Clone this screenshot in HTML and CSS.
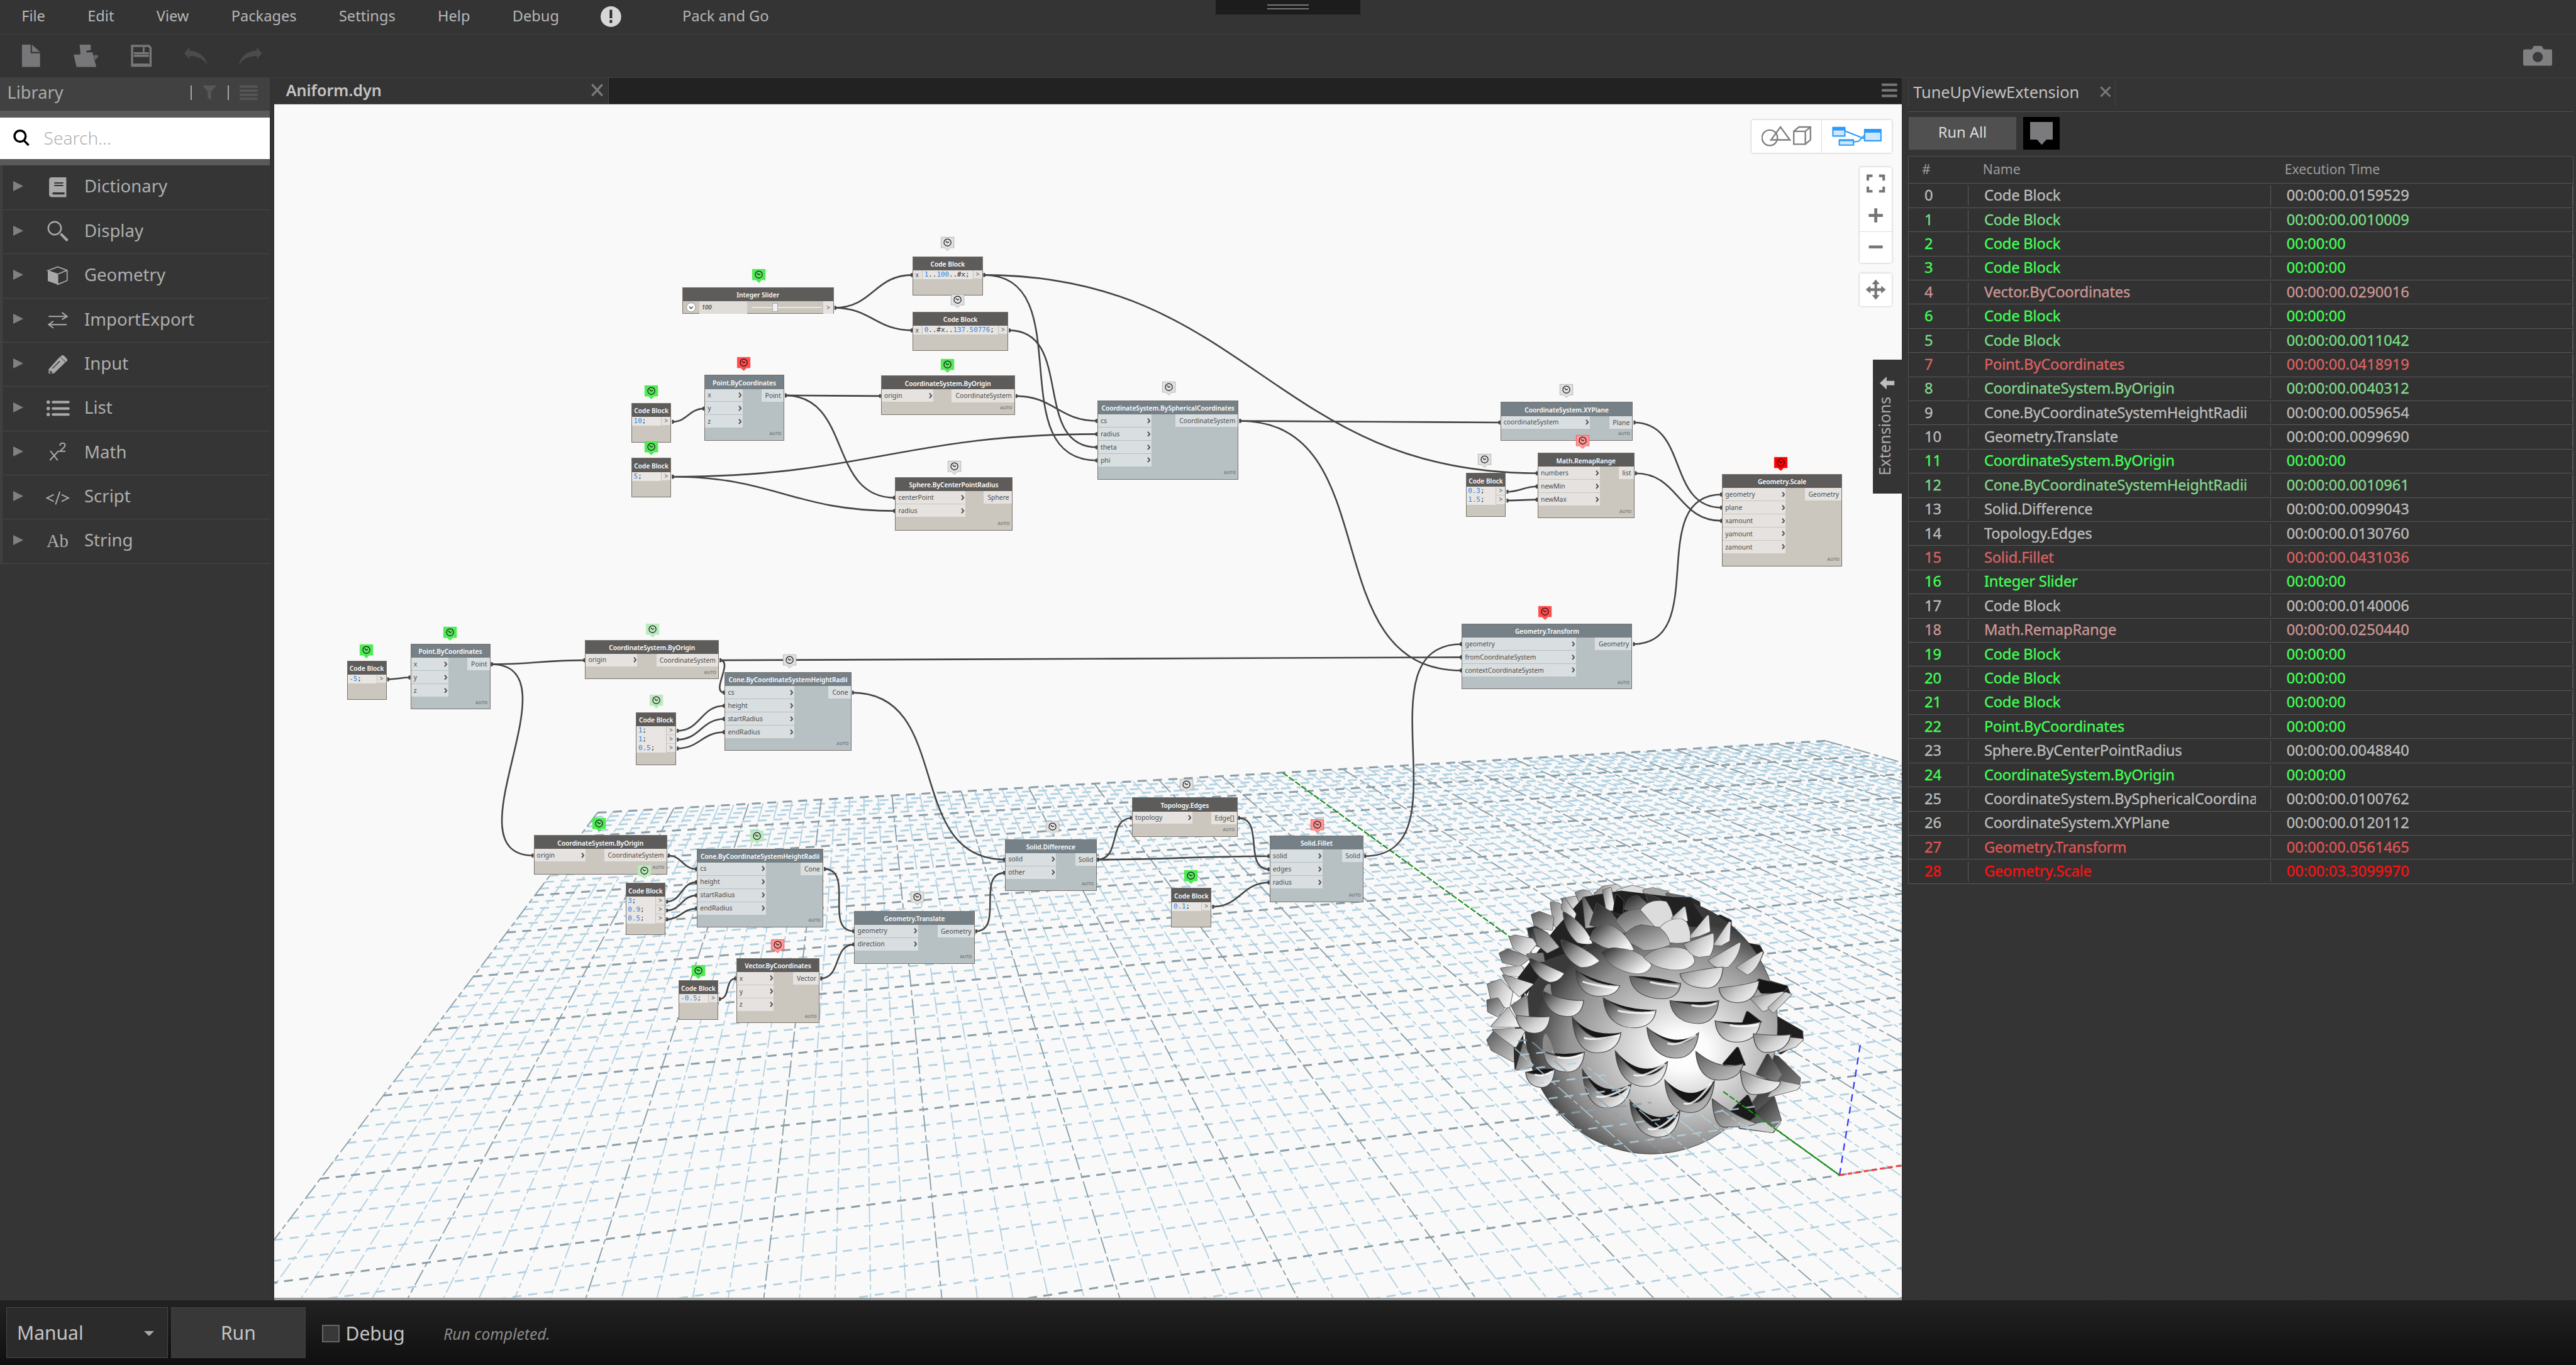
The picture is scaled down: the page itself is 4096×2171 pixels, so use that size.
FILE: index.html
```html
<!DOCTYPE html>
<html lang="en">
<head>
<meta charset="utf-8">
<title>Aniform.dyn</title>
<link rel="stylesheet" href="styles.css">
</head>
<body>
<div class="app">
  <header class="menubar">
    <span>File</span><span>Edit</span><span>View</span><span>Packages</span><span>Settings</span><span>Help</span><span>Debug</span>
    <svg class="alert" viewBox="0 0 48 48"><circle cx="24" cy="24" r="24" fill="#d6d6d6"/><path d="M21 8h6v20h-6zM21 32h6v7h-6z" fill="#2b2b2b"/></svg>
    <span class="pack">Pack and Go</span>
    <div class="handle"><i></i><i></i></div>
  </header>

  <div class="toolbar">
    <svg class="t-new" viewBox="0 0 42 52"><path d="M0 0h20v20h22v32H0z" fill="#77777a"/><path d="M23 0l19 17H23z" fill="#77777a"/></svg>
    <svg class="t-open" viewBox="0 0 58 52"><path d="M14 0h26v13l-9 1-3 6H16z" fill="#77777a"/><path d="M0 23h14l4-5h26l9 34H7z" fill="#77777a"/><path d="M50 36l8-9-3-3-9 1z" fill="#66666a"/></svg>
    <svg class="t-save" viewBox="0 0 49 52"><path d="M3 3h39l4 5v41H3zM7 20h35M7 26h35" fill="none" stroke="#77777a" stroke-width="5"/><path d="M28 6h4v12h-4zM6 44h36v5H6z" fill="#77777a"/></svg>
    <svg class="t-undo" viewBox="0 0 55 42"><path d="M0 14L12 0v8c24 2 38 14 42 34C46 28 32 21 12 20v8z" fill="#4b4b4b"/></svg>
    <svg class="t-redo" viewBox="0 0 55 42"><path d="M55 14L43 0v8C19 10 5 22 1 42 9 28 23 21 43 20v8z" fill="#4b4b4b"/></svg>
    <svg class="t-cam" viewBox="0 0 68 46"><path d="M4 8h16l5-8h18l5 8h16q4 0 4 4v30q0 4-4 4H4q-4 0-4-4V12q0-4 4-4z" fill="#808082"/><circle cx="34" cy="26" r="12" fill="#3a3a3a"/></svg>
  </div>

  <main class="main">
    <aside class="library">
      <div class="lib-head">
        <span>Library</span>
        <i class="bar"></i>
        <svg class="filter" viewBox="0 0 33 34"><path d="M0 0h33L20 14v20l-8-5V14z" fill="#575757"/></svg>
        <i class="bar"></i>
        <svg class="lines" viewBox="0 0 42 34"><path d="M0 2.500h42M0 12h42M0 21.500h42M0 31h42" stroke="#575757" stroke-width="5"/></svg>
      </div>
      <div class="search"><div class="search-box">
        <svg viewBox="0 0 38 40"><circle cx="16" cy="17" r="13" fill="none" stroke="#000" stroke-width="5"/><path d="M25 27l11 11" stroke="#000" stroke-width="5"/></svg>
        <span>Search...</span>
      </div></div>
      <ul class="lib-list">
        <li><svg class="ic" viewBox="0 0 52 52"><path d="M12 3h34v46H12q-6 0-6-6V9q0-6 6-6z" fill="#a9a9a9"/><path d="M18 16h21M18 22h21" stroke="#343434" stroke-width="3"/><path d="M14 38h28v5H14z" fill="#343434"/></svg>Dictionary</li>
        <li><svg class="ic" viewBox="0 0 52 52"><circle cx="19" cy="19" r="15" fill="none" stroke="#a9a9a9" stroke-width="3.500"/><path d="M33 32l16 16" stroke="#a9a9a9" stroke-width="6"/></svg>Display</li>
        <li><svg class="ic" viewBox="0 0 52 52"><path d="M3 14l23 8v24L3 38z" fill="#a9a9a9"/><path d="M3 14L26 5l22 8v24l-22 9V22zM26 22l22-9M3 14l23 8" fill="none" stroke="#a9a9a9" stroke-width="2.500"/></svg>Geometry</li>
        <li><svg class="ic" viewBox="0 0 52 52"><path d="M5 18h42M36 9l12 9-12 7M47 37H5M16 29L5 37l11 8" fill="none" stroke="#a9a9a9" stroke-width="3"/></svg>ImportExport</li>
        <li><svg class="ic" viewBox="0 0 52 52"><path d="M5 37L31 8l13 13-27 26H5z" fill="#a9a9a9"/><path d="M34 6q3-3 7 0l6 6q3 3 0 7l-2 1L32 8z" fill="#a9a9a9"/><path d="M14 35l17-17" stroke="#343434" stroke-width="2"/><path d="M8 40l6 4-2 2H8z" fill="#343434"/></svg>Input</li>
        <li><svg class="ic" viewBox="0 0 52 52"><path d="M15 11h36M15 26h36M15 40h36" stroke="#a9a9a9" stroke-width="6" stroke-linecap="round"/><path d="M4 11h0M4 26h0M4 40h0" stroke="#a9a9a9" stroke-width="8" stroke-linecap="round"/></svg>List</li>
        <li><svg class="ic" viewBox="0 0 52 52"><path d="M9 22l17 22M28 22L8 44" stroke="#a9a9a9" stroke-width="3"/><path d="M31 10q1-6 6-6 7 0 6 6-1 4-12 13h13" fill="none" stroke="#a9a9a9" stroke-width="3"/></svg>Math</li>
        <li><svg class="ic" viewBox="0 0 52 52"><path d="M17 20L1 28l16 8M35 20l16 8-16 8M31 13L21 43" fill="none" stroke="#a9a9a9" stroke-width="3"/></svg>Script</li>
        <li><b class="ic ab">Ab</b>String</li>
      </ul>
    </aside>

    <section class="workspace">
      <div class="tabs">
        <div class="tab"><span>Aniform.dyn</span><svg viewBox="0 0 28 30"><path d="M2 2l24 26M26 2L2 28" stroke="#7a7a7a" stroke-width="5"/></svg></div>
        <svg class="burger" viewBox="0 0 36 34"><path d="M0 4h36M0 17h36M0 30h36" stroke="#767676" stroke-width="6"/></svg>
      </div>
      <div class="canvas">
        <svg class="scene" id="scene" viewBox="638 243 3791 2781" preserveAspectRatio="none">
          <defs>
            <radialGradient id="ball" gradientUnits="userSpaceOnUse" cx="780" cy="900" r="600" gradientTransform="translate(780 0) scale(.9 1) translate(-780 0)">
              <stop offset="0" stop-color="#fff"/><stop offset=".16" stop-color="#fbfbfb"/><stop offset=".45" stop-color="#c6c6c6"/><stop offset=".75" stop-color="#929292"/><stop offset="1" stop-color="#3a3a3a"/>
            </radialGradient>
            <linearGradient id="g1" x1="0" y1=".2" x2=".9" y2=".8"><stop offset="0" stop-color="#3c3c3c"/><stop offset=".45" stop-color="#9a9a9a"/><stop offset="1" stop-color="#f4f4f4"/></linearGradient>
            <linearGradient id="g2" x1="0" y1="0" x2="1" y2=".6"><stop offset="0" stop-color="#828282"/><stop offset=".6" stop-color="#cfcfcf"/><stop offset="1" stop-color="#efefef"/></linearGradient>
            <linearGradient id="g3" x1="0" y1="0" x2=".9" y2="1"><stop offset="0" stop-color="#5a5a5a"/><stop offset="1" stop-color="#c4c4c4"/></linearGradient>
            <linearGradient id="g4" x1="0" y1="0" x2="1" y2="1"><stop offset="0" stop-color="#222"/><stop offset="1" stop-color="#8a8a8a"/></linearGradient>
            <clipPath id="over"><path d="M190 820L480 1000 620 1080 700 1190 860 1200 1000 1130 1200 1260 900 1400 190 1400z" transform="translate(3400 2000) scale(.66965 .49744)"/></clipPath>
          </defs>
          <g id="grid"></g>
          <g id="axes"></g>
          <g id="solid" transform="translate(3400 2000) scale(.66965 .49744)"></g>
          <g id="front"></g>
          <g id="wires" fill="none" stroke="#454545" stroke-width="3.800"></g>
        </svg>
        <div class="nodes" id="nodes"></div>

        <div class="viewmode">
          <div><svg class="shapes" viewBox="0 0 116 50"><g fill="none" stroke="#808080" stroke-width="3.500"><circle cx="19" cy="28" r="18"/><path d="M44 3l22 30H22zM75 13h27v30H75zM75 13l12-10h27l-12 10M114 3v30l-12 10"/></g></svg></div>
          <div><svg class="graph" viewBox="0 0 116 50"><g fill="#cfe6fb" stroke="#2a9bfb" stroke-width="3"><path d="M30 12L75 30 M50 38l12-2 14-14" fill="none"/><path d="M2 4h28v20H2zM76 9h38v26H76zM17 33h33v12H17z"/></g><path d="M2 3h28v8H2zM76 8h38v8H76zM17 32h33v4H17z" fill="#2a9bfb"/></svg></div>
        </div>
        <div class="zoomctl">
          <svg viewBox="0 0 75 75"><path d="M19 31V20h11M45 20h11v11M56 45v11H45M30 56H19V45" fill="none" stroke="#767676" stroke-width="6"/></svg>
          <svg viewBox="0 0 75 75"><path d="M37.500 21v33M21 37.500h33" stroke="#767676" stroke-width="7"/></svg>
          <svg viewBox="0 0 75 75"><path d="M21 35.500h33" stroke="#767676" stroke-width="7"/></svg>
        </div>
        <div class="panctl"><svg viewBox="0 0 75 75"><path d="M37.500 22v31M22 37.500h31" stroke="#767676" stroke-width="6"/><path d="M37.500 14l9 11h-18zM37.500 61l9-11h-18zM14 37.500l11-9v18zM61 37.500l-11-9v18z" fill="#767676"/></svg></div>
        <div class="extensions"><svg viewBox="0 0 34 30"><path d="M0 15L16 0v10h18v10H16v10z" fill="#bdbdbd"/></svg><span>Extensions</span></div>
      </div>
    </section>

    <aside class="tuneup">
      <div class="ext-tabs"><div class="ext-tab"><span>TuneUpViewExtension</span><svg viewBox="0 0 28 28"><path d="M2 2l24 24M26 2L2 26" stroke="#7a7a7a" stroke-width="4.500"/></svg></div></div>
      <div class="actions">
        <button class="runall">Run All</button>
        <button class="notes"><svg viewBox="0 0 54 54"><path d="M0 0h54v41H38L27 53 16 41H0z" fill="#7b7b7e"/></svg></button>
      </div>
      <div class="table">
        <div class="thead"><span>#</span><span>Name</span><span>Execution Time</span></div>
        <div id="rows"></div>
      </div>
    </aside>
  </main>

  <footer class="footer">
    <div class="select"><span>Manual</span><i></i></div>
    <button class="run">Run</button>
    <i class="check"></i><span class="dbg">Debug</span>
    <em>Run completed.</em>
  </footer>
</div>
<script src="app.js"></script>
</body>
</html>
```

FILE: styles.css
```css
/* 1rem = 100 design units */
html { font-size: 68.2667px; }
* { box-sizing: border-box; }
body { margin: 0; background: #343434; overflow: hidden; }
.app {
  width: 60rem; height: 31.8rem; display: flex; flex-direction: column;
  font-family: "Noto Sans", "Open Sans", sans-serif; font-size: .346rem; color: #b4b4b4; overflow: hidden;
  line-height: 1.36;
}
button { font: inherit; color: inherit; border: 0; padding: 0; border-radius: 0; }
svg { display: block; flex: none; }
i { display: block; flex: none; }

.menubar {
  position: relative; height: .81rem; flex: none; display: flex; align-items: center; gap: .986rem;
  padding: 0 0 .05rem .5rem; border-bottom: .025rem solid #3f3f3f; color: #b6b6b6; white-space: nowrap;
}
.alert { width: .48rem; height: .48rem; margin-left: -.02rem; margin-top: .04rem; }
.pack { margin-left: .44rem; }
.handle {
  position: absolute; left: 28.32rem; top: 0; width: 3.36rem; height: .34rem; background: #1c1c1c;
  display: flex; flex-direction: column; align-items: center; gap: .05rem; padding-top: .1rem;
}
.handle i { width: .96rem; height: .035rem; background: #777; }

.toolbar { height: 1rem; flex: none; display: flex; align-items: center; padding: 0 .55rem 0 .52rem; border-bottom: .025rem solid #3f3f3f; }
.t-new { width: .42rem; height: .52rem; }
.t-open { width: .58rem; height: .52rem; margin-left: .78rem; }
.t-save { width: .49rem; height: .52rem; margin-left: .75rem; }
.t-undo { width: .55rem; height: .42rem; margin-left: .76rem; }
.t-redo { width: .55rem; height: .42rem; margin-left: .7rem; }
.t-cam { width: .68rem; height: .46rem; margin-left: auto; }

.main { flex: 1; min-height: 0; display: grid; grid-template-columns: 6.28rem 38.01rem 15.71rem; }

.library { background: #353535; }
.lib-head {
  height: .77rem; background: #414141; display: flex; align-items: center; padding: 0 .28rem .06rem .17rem;
  font-size: .398rem; color: #ababab;
}
.lib-head span { flex: 1; }
.lib-head .bar { width: .03rem; height: .34rem; background: #a5a5a5; }
.filter { width: .33rem; height: .34rem; margin: 0 .25rem; }
.lines { width: .42rem; height: .34rem; margin-left: .25rem; }
.search { height: 1.28rem; background: #5a5858; padding: .16rem 0; }
.search-box { height: .96rem; background: #fff; display: flex; align-items: center; padding: 0 0 .02rem .31rem; gap: .33rem; font-size: .412rem; color: #b2b2b2; font-weight: 300; }
.search-box svg { width: .38rem; height: .4rem; }
.lib-list { list-style: none; margin: 0; padding: 0; border-left: .06rem solid #404040; }
.lib-list li {
  height: 1.031rem; border-bottom: .025rem solid #474747; display: flex; align-items: center;
  padding: 0 0 .06rem .25rem; font-size: .404rem; color: #aeaeae;
}
.lib-list li::before { content: ""; border-left: .24rem solid #808080; border-top: .125rem solid transparent; border-bottom: .125rem solid transparent; }
.ic { width: .52rem; height: .52rem; margin: .05rem .36rem 0 .54rem; overflow: visible; }
.ab { font: 400 .42rem/.52rem "Liberation Serif", serif; }

.workspace { display: flex; flex-direction: column; padding-left: .1rem; background: #343434; }
.tabs { height: .62rem; flex: none; background: #222; display: flex; align-items: stretch; justify-content: space-between; border-bottom: .02rem solid #555; }
.tab { width: 7.8rem; background: #343434; border-right: .02rem solid #484848; display: flex; align-items: center; justify-content: space-between; padding: 0 .12rem .02rem .28rem; font-size: .368rem; font-weight: 600; color: #c4c4c4; }
.tab svg { width: .28rem; height: .3rem; }
.burger { width: .36rem; height: .34rem; margin: .12rem .1rem 0 0; }
.canvas { position: relative; flex: 1; min-height: 0; background: #f9f9f9; border-bottom: .06rem solid #999; overflow: hidden; }
.scene { position: absolute; inset: 0; width: 37.91rem; height: 27.81rem; }

/* nodes on the graph canvas */
.node {
  position: absolute; left: calc(var(--x) * .01rem - 6.38rem); top: calc(var(--y) * .01rem - 2.43rem);
  width: calc(var(--w) * .01rem); height: calc(var(--h) * .01rem);
  background: #cbc6be; border: .013rem solid #77736e; font-size: .152rem; line-height: .3rem; color: #4c4c4c; white-space: nowrap;
}
.node h4 { margin: 0; height: .31rem; line-height: .31rem; background: #5e5c5a; color: #fff; font-size: .149rem; font-weight: 600; text-align: center; padding-top: .02rem; }
.node .body { display: flex; justify-content: space-between; }
.node .in { width: calc(var(--pw) * .01rem); }
.node .in div { height: .307rem; background: #e5e2df; border-bottom: .013rem solid #cbc6be; padding: 0 .02rem 0 .06rem; display: flex; justify-content: space-between; align-items: center; }
.node .in svg { width: .08rem; height: .13rem; }
.node .out { height: .295rem; background: #e5e2df; width: calc(var(--ow) * .01rem); text-align: right; padding-right: .06rem; }
.node .auto { position: absolute; right: .05rem; bottom: .05rem; font-size: .1rem; line-height: .18rem; font-weight: 700; color: #868480; }
.node.blue { background: #b7c0c3; }
.node.blue h4 { background: #768187; }
.node.blue .in div, .node.blue .out { background: #d9dee0; }
.node.blue .in div { border-color: #b7c0c3; }
.node.blue .auto { color: #7b8386; }
.code { display: flex; line-height: .206rem; }
.code .x { width: .22rem; padding-left: .05rem; background: #e5e2df; height: .206rem; border-right: .013rem solid #c5c0ba; }
.code pre { margin: 0; flex: 1; background: #e8e5e2; padding-left: .04rem; font: .159rem/.206rem "DejaVu Sans Mono", "Liberation Mono", monospace; color: #333; }
.code pre b { font-weight: 400; color: #2f86e4; }
.code .o { width: .22rem; background: #e5e2df; text-align: center; }
.code .o div { height: .206rem; border-left: .013rem solid #c5c0ba; border-bottom: .013rem solid #cbc6be; line-height: .19rem; font-size: .145rem; }
.slider { display: flex; align-items: center; height: .3rem; }
.slider .rnd { width: .23rem; height: .23rem; margin: 0 .075rem; }
.slider .val { width: 1.12rem; height: .3rem; background: #e0dcd7; font-style: italic; padding-left: .06rem; color: #111; font-size: .14rem; }
.slider .track { position: relative; width: 1.64rem; height: .035rem; margin-left: .1rem; background: #e8e6e3; }
.slider .track i { position: absolute; left: .48rem; top: -.09rem; width: .13rem; height: .21rem; background: #f0f0f0; border: .01rem solid #a9a9a9; }
.slider .o { margin-left: auto; width: .23rem; height: .3rem; background: #e5e2df; text-align: center; }
.badge { position: absolute; left: calc(var(--x) * .01rem - 6.535rem); top: calc(var(--y) * .01rem - 2.43rem); width: .31rem; height: .32rem; overflow: visible; }

.viewmode, .zoomctl, .panctl { position: absolute; background: #fff; border-radius: .04rem; box-shadow: 0 0 .05rem rgba(0,0,0,.28); }
.viewmode { left: 34.41rem; top: .37rem; width: 3.28rem; height: .76rem; display: flex; }
.viewmode div { flex: 1; display: flex; align-items: center; justify-content: center; }
.viewmode div + div { border-left: .015rem solid #ddd; }
.viewmode svg { width: 1.16rem; height: .5rem; }
.zoomctl { left: 36.94rem; top: 1.47rem; width: .75rem; height: 2.22rem; display: grid; grid-template-rows: .74rem .75rem .73rem; }
.zoomctl svg { width: .75rem; height: .75rem; }
.zoomctl svg:last-child { border-top: .015rem solid #ddd; }
.panctl { left: 36.94rem; top: 3.94rem; width: .75rem; height: .76rem; }
.panctl svg { width: .75rem; height: .75rem; }
.extensions { position: absolute; right: 0; top: 5.95rem; width: .66rem; height: 3.12rem; background: #343434; display: flex; flex-direction: column; align-items: center; padding-top: .39rem; gap: .17rem; font-size: .362rem; color: #ababab; }
.extensions svg { width: .34rem; height: .3rem; }
.extensions span { writing-mode: vertical-rl; transform: rotate(180deg); line-height: .66rem; margin-left: -.12rem; }

.tuneup { background: #343434; padding: .03rem .06rem 0 .15rem; }
.ext-tabs { height: .77rem; border-bottom: .025rem solid #505050; padding-top: .04rem; }
.ext-tab { width: 4.84rem; height: .6rem; border: solid #424242; border-width: 0 .02rem; display: flex; align-items: center; justify-content: space-between; padding: 0 .09rem .08rem .11rem; font-size: .371rem; color: #c2c2c2; }
.ext-tab svg { width: .26rem; height: .26rem; }
.actions { height: 1.02rem; display: flex; gap: .16rem; padding: .12rem 0 0 .02rem; }
.runall { width: 2.5rem; height: .75rem; background: #505050; color: #dcdcdc; padding-bottom: .05rem; }
.notes { width: .86rem; height: .75rem; background: #000; display: flex; justify-content: center; padding-top: .11rem; }
.notes svg { width: .54rem; height: .54rem; }
.table { border: .02rem solid #505050; border-bottom: 0; background: #323232; }
.thead { height: .64rem; display: grid; grid-template-columns: 1.42rem 7.03rem 1fr; align-items: center; padding: 0 0 .01rem .31rem; font-size: .311rem; color: #9b9b9b; border-bottom: .02rem solid #555; }
.row { height: .5625rem; display: grid; grid-template-columns: 1.39rem 7.03rem 1fr; padding: .04rem 0; border-bottom: .027rem solid #585858; font-size: .347rem; -webkit-text-stroke: .35px currentColor; }
.row span { line-height: .45rem; border-right: .016rem solid #5c5c5c; padding-left: .37rem; white-space: nowrap; overflow: hidden; }
.row span:nth-child(2) { border-right: 0; letter-spacing: -.0026rem; }
.row span:nth-child(3) { border-left: .016rem solid #5c5c5c; padding-left: .37rem; }
.row b { display: block; font-weight: 400; width: 6.33rem; overflow: hidden; }

.footer { height: 1.5rem; flex: none; background: linear-gradient(#222, #0f0f0f); display: flex; align-items: center; padding: 0 0 .0rem .15rem; font-size: .44rem; color: #c4c4c4; }
.select { width: 3.76rem; height: 1.19rem; background: #2b2b2b; border: .025rem solid #464646; display: flex; align-items: center; justify-content: space-between; padding: .03rem .3rem 0 .23rem; }
.select i { border: .13rem solid transparent; border-top-color: #a9a9a9; border-bottom: 0; }
.run { width: 3.14rem; height: 1.19rem; background: #383838; border: .02rem solid #404040; margin-left: .07rem; padding-top: .03rem; }
.check { width: .41rem; height: .41rem; background: #383838; border: .03rem solid #666; margin-left: .38rem; margin-top: .03rem; }
.dbg { margin-left: .14rem; margin-top: .04rem; }
.footer em { font-size: .361rem; color: #8a8a8a; margin-left: .9rem; margin-top: .05rem; }
```

FILE: app.js
```js
// ---------- execution table ----------
const G = '#42ff55', S = '#84d88d', N = '#bdbdbd', P = '#cc9696', R = '#dc6262', X = '#ff1010';
const rows = [
  [0, 'Code Block', '00:00:00.0159529', N], [1, 'Code Block', '00:00:00.0010009', '#78df84'], [2, 'Code Block', '00:00:00', G],
  [3, 'Code Block', '00:00:00', G], [4, 'Vector.ByCoordinates', '00:00:00.0290016', P], [6, 'Code Block', '00:00:00', G],
  [5, 'Code Block', '00:00:00.0011042', '#78df84'], [7, 'Point.ByCoordinates', '00:00:00.0418919', R],
  [8, 'CoordinateSystem.ByOrigin', '00:00:00.0040312', S], [9, 'Cone.ByCoordinateSystemHeightRadii', '00:00:00.0059654', N],
  [10, 'Geometry.Translate', '00:00:00.0099690', N], [11, 'CoordinateSystem.ByOrigin', '00:00:00', G],
  [12, 'Cone.ByCoordinateSystemHeightRadii', '00:00:00.0010961', S], [13, 'Solid.Difference', '00:00:00.0099043', N],
  [14, 'Topology.Edges', '00:00:00.0130760', N], [15, 'Solid.Fillet', '00:00:00.0431036', R], [16, 'Integer Slider', '00:00:00', G],
  [17, 'Code Block', '00:00:00.0140006', N], [18, 'Math.RemapRange', '00:00:00.0250440', P], [19, 'Code Block', '00:00:00', G],
  [20, 'Code Block', '00:00:00', G], [21, 'Code Block', '00:00:00', G], [22, 'Point.ByCoordinates', '00:00:00', G],
  [23, 'Sphere.ByCenterPointRadius', '00:00:00.0048840', N], [24, 'CoordinateSystem.ByOrigin', '00:00:00', G],
  [25, 'CoordinateSystem.BySphericalCoordinates', '00:00:00.0100762', N], [26, 'CoordinateSystem.XYPlane', '00:00:00.0120112', N],
  [27, 'Geometry.Transform', '00:00:00.0561465', '#e05555'], [28, 'Geometry.Scale', '00:00:03.3099970', X]
];
document.getElementById('rows').innerHTML = rows.map(r =>
  `<div class="row" style="color:${r[3]}"><span>${r[0]}</span><span><b>${r[1]}</b></span><span>${r[2]}</span></div>`).join('');

// ---------- nodes ----------
// key: [x, y, w, h, title, blue, inputs, output, input column width, output width]
const nodes = {
  D: [1641, 873.6, 185.5, 153, 'Point.ByCoordinates', 1, ['x', 'y', 'z'], 'Point', 87, 51],
  G: [2052, 875, 312, 91.5, 'CoordinateSystem.ByOrigin', 0, ['origin'], 'CoordinateSystem', 120, 146],
  H: [2085, 1112, 273, 124, 'Sphere.ByCenterPointRadius', 0, ['centerPoint', 'radius'], 'Sphere', 162, 65],
  I: [2556, 933, 329, 184, 'CoordinateSystem.BySphericalCoordinates', 1, ['cs', 'radius', 'theta', 'phi'], 'CoordinateSystem', 124, 146],
  K: [956, 1500, 186, 153, 'Point.ByCoordinates', 1, ['x', 'y', 'z'], 'Point', 87, 52],
  L: [1363, 1490.6, 311.5, 92, 'CoordinateSystem.ByOrigin', 0, ['origin'], 'CoordinateSystem', 120, 144],
  M: [1688, 1566, 295, 183, 'Cone.ByCoordinateSystemHeightRadii', 1, ['cs', 'height', 'startRadius', 'endRadius'], 'Cone', 160, 52],
  O: [1243, 1945.6, 311, 92, 'CoordinateSystem.ByOrigin', 0, ['origin'], 'CoordinateSystem', 119, 145],
  P: [1623.4, 1977, 294.200, 183.6, 'Cone.ByCoordinateSystemHeightRadii', 1, ['cs', 'height', 'startRadius', 'endRadius'], 'Cone', 159, 52],
  S: [1715, 2232, 194, 152, 'Vector.ByCoordinates', 0, ['x', 'y', 'z'], 'Vector', 86, 61],
  T: [1990, 2122, 280, 123, 'Geometry.Translate', 1, ['geometry', 'direction'], 'Geometry', 147, 85],
  U: [2341, 1955, 213, 121, 'Solid.Difference', 1, ['solid', 'other'], 'Solid', 117, 48],
  V: [2636.6, 1858, 245.8, 91.7, 'Topology.Edges', 0, ['topology'], 'Edge[]', 139, 59],
  W: [2957, 1947, 219, 154.700, 'Solid.Fillet', 1, ['solid', 'edges', 'radius'], 'Solid', 122, 49],
  Y: [3494.8, 936.7, 308.6, 90.3, 'CoordinateSystem.XYPlane', 1, ['coordinateSystem'], 'Plane', 207, 54],
  Z: [3581.5, 1055, 225, 152.600, 'Math.RemapRange', 0, ['numbers', 'newMin', 'newMax'], 'list', 144, 34],
  AB: [4011, 1104.4, 279.7, 215.6, 'Geometry.Scale', 0, ['geometry', 'plane', 'xamount', 'yamount', 'zamount'], 'Geometry', 147, 85],
  AC: [3405, 1453, 397, 153, 'Geometry.Transform', 1, ['geometry', 'fromCoordinateSystem', 'contextCoordinateSystem'], 'Geometry', 264, 85]
};
// key: [x, y, w, h, lines, hasInput]
const blocks = {
  B: [2125.6, 597, 163.4, 91.6, ['1..100..#x;'], 1],
  C: [2125.6, 726, 222.4, 92, ['0..#x..137.50776;'], 1],
  E: [1470.6, 939, 93, 92, ['10;']],
  F: [1470.6, 1067, 93, 92, ['5;']],
  J: [808, 1539, 92.4, 92, ['-5;']],
  Nb: [1481.5, 1659, 93.5, 123.5, ['1;', '1;', '0.5;']],
  Q: [1457, 2057, 93, 122, ['3;', '0.9;', '0.5;']],
  Rb: [1580, 2284, 93, 92, ['-0.5;']],
  Xb: [2728, 2069, 94, 91.7, ['0.1;']],
  AA: [3414, 1102, 93.5, 102.7, ['0.3;', '1.5;']]
};
const box = (n) => `--x:${n[0]};--y:${n[1]};--w:${n[2]};--h:${n[3]}`;
const chev = '<svg viewBox="0 0 8 13"><path d="M1.500 1L6 6.500 1.500 12" fill="none" stroke="#555" stroke-width="3"/></svg>';
let html = '';
for (const n of Object.values(nodes)) {
  html += `<div class="node${n[5] ? ' blue' : ''}" style="${box(n)};--pw:${n[8]};--ow:${n[9]}"><h4>${n[4]}</h4><div class="body">` +
    `<div class="in">${n[6].map(p => `<div>${p}${chev}</div>`).join('')}</div><div class="out">${n[7]}</div></div><span class="auto">AUTO</span></div>`;
}
const tint = s => s.replace(/-?\d+(?:\.\d+)?/g, '<b>$&</b>');
for (const n of Object.values(blocks)) {
  html += `<div class="node" style="${box(n)}"><h4>Code Block</h4><div class="code">${n[5] ? '<div class="x">x</div>' : ''}` +
    `<pre>${n[4].map(tint).join('\n')}</pre><div class="o">${n[4].map(() => '<div>&gt;</div>').join('')}</div></div></div>`;
}
html += `<div class="node" style="--x:1589;--y:669;--w:353;--h:62"><h4>Integer Slider</h4><div class="slider">` +
  `<svg class="rnd" viewBox="0 0 23 23"><circle cx="11.500" cy="11.500" r="10.500" fill="#fff" stroke="#777"/><path d="M7.500 9.500l4 5 4-5" fill="none" stroke="#444" stroke-width="2"/></svg>` +
  `<div class="val">100</div><div class="track"><i></i></div><div class="o">&gt;</div></div></div>`;

// ---------- timing badges ----------
const tone = {
  g: ['#55e65b', '#16ff16'], l: ['#bde8c0', '#a4f2a8'], n: ['#e0e0e0', '#9d9d9d'],
  p: ['#ff9494', '#ff3838'], r: ['#ff4c4c', '#ff4040'], x: ['#ff0000', '#ff0000']
};
const badges = [
  [1767, 627, 'g'], [2207, 552, 'n'], [2230, 686, 'n'], [1733, 832.5, 'r'], [1516.5, 898.6, 'g'], [1516.5, 1028, 'g'],
  [2207, 837, 'g'], [2222.5, 1073.6, 'n'], [2723, 889, 'n'], [854, 1501, 'g'], [1048, 1461, 'g'], [1520.6, 1452.5, 'l'],
  [1838.7, 1525.6, 'n'], [1528.6, 1618.8, 'l'], [1396, 1906, 'g'], [1763, 1935.6, 'l'], [1501.5, 2016, 'l'], [1626.6, 2248, 'g'],
  [1811, 2189, 'p'], [2136.5, 2077, 'n'], [2452, 1913, 'n'], [2763, 1815, 'n'], [3068.5, 1908, 'p'], [2774, 2028, 'g'],
  [3648, 894.5, 'n'], [3687, 1013, 'p'], [3458, 1058, 'n'], [4148.5, 1064.7, 'x'], [3599, 1412, 'r']
];
for (const [x, y, t] of badges) {
  html += `<svg class="badge" style="--x:${x};--y:${y}" viewBox="0 0 31 32"><path d="M.5.5h30v24.500h-8L15.500 31.500l-7-6.500h-8z" fill="${tone[t][0]}" stroke="${tone[t][1]}"/>` +
    `<circle cx="15.500" cy="12.800" r="8.200" fill="none" stroke="#111" stroke-width="1.700"/><path d="M11.500 9.500l4 3.800 3.500-1.800" fill="none" stroke="#111" stroke-width="1.700"/></svg>`;
}
document.getElementById('nodes').innerHTML = html;

// ---------- wires ----------
const isBlock = k => k in blocks;
const outPt = (k, i) => {
  if (k === 'A') return [1943, 717];
  const n = isBlock(k) ? blocks[k] : nodes[k];
  return [n[0] + n[2] + 1, n[1] + (isBlock(k) ? 43.5 + 20.6 * i : 47.5)];
};
const inPt = (k, i) => isBlock(k) ? [blocks[k][0] - 1, blocks[k][1] + 43.5] : [nodes[k][0] - 1, nodes[k][1] + 47.5 + 30.7 * i];
const links = [
  ['A', 0, 'B', 0], ['A', 0, 'C', 0], ['B', 0, 'I', 3], ['B', 0, 'Z', 0], ['C', 0, 'I', 2], ['E', 0, 'D', 1], ['D', 0, 'G', 0],
  ['D', 0, 'H', 0], ['F', 0, 'H', 1], ['F', 0, 'I', 1], ['G', 0, 'I', 0], ['I', 0, 'Y', 0], ['I', 0, 'AC', 2], ['Y', 0, 'AB', 1],
  ['Z', 0, 'AB', 2], ['AA', 0, 'Z', 1], ['AA', 1, 'Z', 2], ['AC', 0, 'AB', 0], ['W', 0, 'AC', 0], ['L', 0, 'AC', 1],
  ['L', 0, 'M', 0], ['Nb', 0, 'M', 1], ['Nb', 1, 'M', 2], ['Nb', 2, 'M', 3], ['M', 0, 'U', 0], ['K', 0, 'L', 0], ['K', 0, 'O', 0],
  ['J', 0, 'K', 1], ['O', 0, 'P', 0], ['Q', 0, 'P', 1], ['Q', 1, 'P', 2], ['Q', 2, 'P', 3], ['P', 0, 'T', 0], ['S', 0, 'T', 1],
  ['Rb', 0, 'S', 0], ['T', 0, 'U', 1], ['U', 0, 'V', 0], ['U', 0, 'W', 0], ['V', 0, 'W', 1], ['Xb', 0, 'W', 2]
];
document.getElementById('wires').innerHTML = links.map(([a, i, b, j]) => {
  const [x1, y1] = outPt(a, i), [x2, y2] = inPt(b, j);
  const o = Math.hypot(x2 - x1, y2 - y1) * .45;
  return `<path d="M${x1} ${y1}C${x1 + o} ${y1} ${x2 - o} ${y2} ${x2} ${y2}"/>` +
    `<path d="M${x1} ${y1 - 5}v10a5 5 0 0 0 0-10zM${x2} ${y2 - 5}v10a5 5 0 0 1 0-10z" fill="#454545" stroke="none"/>`;
}).join('');

// ---------- ground grid, one unit = one major cell ----------
const proj = (u, v) => {
  const w = 6.058 + .797 * v + .1625 * u;
  return [((25952 + 1595 * v + 2465 * u) / w).toFixed(1), (1087 + 10000 / w).toFixed(1)];
};
const seg = (a, b) => `M${a[0]} ${a[1]}L${b[0]} ${b[1]}`;
let rowMinor = '', rowMajor = '', colMinor = '', colMajor = '';
for (let i = -50; i <= 50; i++) {
  const t = i / 5, col = seg(proj(t, 10), proj(t, -4));
  if (i % 5) colMinor += col; else if (i) colMajor += col;
  if (i >= -20) {
    const row = seg(proj(-10, t), proj(10, t));
    if (i % 5) rowMinor += row; else rowMajor += row;
  }
}
const gridSvg =
  `<g fill="none"><path d="${colMinor}" stroke="#b3d1e1" stroke-width="2.700" stroke-dasharray="40 8 12 8"/>` +
  `<path d="${rowMinor}" stroke="#b3d1e1" stroke-width="4" stroke-dasharray="21 16"/>` +
  `<path d="${colMajor}" stroke="#8b9fa9" stroke-width="2.800" stroke-dasharray="40 8 12 8"/>` +
  `<path d="${rowMajor}" stroke="#8b9fa9" stroke-width="4.400" stroke-dasharray="21 15"/></g>`;
document.getElementById('grid').innerHTML = gridSvg;
document.getElementById('axes').innerHTML =
  '<g fill="none"><path d="M2987 1800L4284 2737.700" stroke="#1f8f1f" stroke-width="3.200" stroke-dasharray="14 4"/>' +
  '<path d="M4284 2737.700L4333 2429" stroke="#3a3aff" stroke-width="3.400" stroke-dasharray="17 12"/>' +
  '<path d="M4284 2737.700L4432 2714.500" stroke="#ff3a3a" stroke-width="4.500" stroke-dasharray="11 8"/></g>';

// ---------- spiked solid ----------
// a rounded facet: dark rim first, then the shaded face
const poly = (pts, f) => `<path d="M${pts}z" fill="#555" stroke="#555" stroke-width="11" stroke-linejoin="round"/>` +
  `<path d="M${pts}z" fill="${f}" stroke="${f}" stroke-width="7" stroke-linejoin="round"/>`;
// left tip, right tip, bottom, rim middle, inner-shadow middle, fill
const petal = (lx, ly, rx, ry, bx, by, mx, my, dy, f) => {
  const outer = `M${lx} ${ly}C${lx + (bx - lx) * .06} ${by - (by - ly) * .28} ${bx - (bx - lx) * .5} ${by} ${bx} ${by}C${bx + (rx - bx) * .6} ${by} ${rx - (rx - bx) * .06} ${ry + (by - ry) * .6} ${rx} ${ry}Q${mx + 15} ${2 * my - (ly + ry) / 2} ${lx} ${ly}z`;
  let s = '';
  if (dy) s += `<path d="M${lx} ${ly}Q${mx} ${2 * dy - (ly + ry) / 2} ${rx} ${ry}Q${mx + 15} ${2 * my + 8 - (ly + ry) / 2} ${lx} ${ly}z" fill="#161616"/>`;
  s += `<path d="${outer}" fill="url(#${f})" stroke="#4a4a4a" stroke-width="3" stroke-linejoin="round"/>`;
  if (dy) s += `<path d="M${lx + (mx - lx) * .75} ${my + 3}Q${mx + 12} ${my + 15} ${rx - 12} ${ry + 14}" fill="none" stroke="#fff" stroke-opacity=".8" stroke-width="9" stroke-linecap="round"/>`;
  return s;
};
let s = '';
const L = (p, f) => { s += poly(p, f || 'url(#g2)'); };
// crown behind the ball
L('355 190L400 180 412 200 420 262 385 250', 'url(#g2)'); L('405 162L428 150 445 154 485 215 476 262 430 240', 'url(#g2)');
L('470 165L500 132 545 125 566 150 552 250 490 220', 'url(#g2)'); L('550 150L600 130 645 145 645 190 570 200', '#dedede');
L('640 150L670 140 720 158 740 190 700 205 650 190', '#a8a8a8'); L('720 165L780 180 770 240 730 220', '#6d6d6d');
L('750 185L800 185 830 205 834 262 862 262 866 330 780 330', '#2a2a2a'); L('862 290L905 268 940 292 938 380 890 404', '#222');
L('915 400L972 392 1040 410 1052 440 1020 540 965 505', '#202020'); L('982 555L1050 565 1134 600 1144 630 1085 720 1013 655', '#242424');
L('1070 740L1095 738 1188 810 1190 850 1115 912 1070 830', '#202020'); L('1070 915L1105 930 1180 1030 1176 1072 1075 1114 1035 1010', 'url(#g4)');
L('1005 1100L1060 1095 1090 1120 1113 1225 1088 1280 975 1262 945 1185', 'url(#g4)');
L('318 208L340 210 400 268 385 312 350 336 330 312'); L('252 264L276 252 322 276 318 332 264 322', 'url(#g3)');
L('238 330L262 320 300 350 300 420 250 400', 'url(#g4)'); L('175 370L190 362 250 378 262 402 230 454 190 422');
L('140 445L166 427 240 466 205 502 152 485', 'url(#g3)'); L('145 516L212 506 230 550 160 546'); L('99 590L140 570 180 625 168 702 110 655');
L('97 665L130 657 150 702 130 736 100 716', 'url(#g3)'); L('97 850L118 814 190 890 186 948 112 896', 'url(#g3)');
// ball
s += '<ellipse cx="665" cy="780" rx="440" ry="604" fill="url(#ball)" stroke="#333" stroke-width="2"/>';
s += '<path d="M330 330L430 180 560 150 800 190 870 330 700 300 520 330 420 420 290 480 270 560 230 640 200 560z" fill="#222"/>';
s += '<path d="M232 560Q205 800 232 940L190 990Q175 780 232 560z" fill="#2b2b2b"/>';
L('152 548L250 590 206 642 182 612'); L('168 702L206 786 112 786', 'url(#g2)'); L('182 690L230 645 236 735 205 750', 'url(#g3)');
L('116 802L226 800 192 880 152 842'); L('222 870L250 973 198 988', 'url(#g3)');
L('260 330L300 350 340 414 304 438 272 402', 'url(#g3)'); L('236 450L286 446 290 480 250 480', '#777');
// crown in front
L('362 190L400 260 390 300 356 232'); L('430 185L462 260 468 316 440 322', 'url(#g3)'); L('500 150L522 140 536 240 512 240');
L('478 215L520 250 576 346 520 330 455 310', 'url(#g4)'); L('545 172L566 200 562 260 536 250', '#151515');
L('576 232Q586 180 616 178L650 215Q628 246 576 236', 'url(#g4)'); L('650 170L690 190 700 205 660 212', '#333');
L('546 295Q570 240 630 240 668 290 672 322 620 315 578 342', 'url(#g3)'); L('632 240Q662 190 715 205 742 260 735 300L684 322', '#dcdcdc');
L('740 280L780 230 788 290'); L('800 370L862 270 866 340 830 360'); L('886 402L938 300 934 384 908 404');
L('690 345Q712 285 770 286L785 300Q802 350 796 385 750 400 720 385', '#dedede');
L('566 370Q600 322 630 314L690 326Q722 360 726 402 680 428 640 425', 'url(#g3)');
L('362 255Q432 312 456 395 430 400 410 390 370 340 362 255', 'url(#g1)');
L('456 378Q462 318 512 310 572 340 600 426 550 432 500 410', 'url(#g1)');
L('355 385Q434 420 480 480 450 510 420 505 366 470 355 385', 'url(#g1)');
L('495 440Q520 415 555 425 626 434 662 500 650 540 610 535 530 520 495 440', 'url(#g1)');
L('643 462Q690 415 730 420 806 415 812 482 800 518 750 518 680 514 643 462', 'url(#g2)');
L('783 402L878 355Q882 420 866 452L830 458Q800 450 783 402');
L('868 478L972 398Q966 460 930 505L900 508Q880 500 868 478'); L('965 510L1050 440Q1030 520 1000 540');
L('245 472L357 540Q340 575 312 575 262 550 245 472', 'url(#g1)');
L('1030 590L1040 568 1136 600 1120 626 1050 628', '#151515');
L('1013 655L1122 628Q1100 690 1055 712'); L('1075 700L1132 630 1148 638 1090 718');
L('1110 905L1150 842 1190 848 1165 880'); L('1115 1045L1180 1064 1170 1080 1075 1114');
L('975 1258L1050 1240 1110 1240 1085 1280', '#cfcfcf');
L('1090 1120L1113 1225 1090 1255 1030 1190', 'url(#g4)');
L('1000 720L1044 765 985 775', '#151515'); L('965 888L988 965 918 962', '#151515'); L('1070 920L1116 1012 1100 1042 1034 1010', 'url(#g4)');
L('1000 1112L1030 1200 1005 1226 940 1188', '#1c1c1c');
const petals = [
  [400, 515, 555, 595, 480, 645, 440, 575, 560, 'g1'], [590, 550, 768, 585, 705, 657, 690, 577, 560, 'g3'],
  [765, 540, 915, 508, 860, 607, 850, 518, 0, 'g2'], [900, 605, 1040, 572, 965, 675, 975, 592, 0, 'g2'],
  [288, 620, 430, 665, 375, 740, 340, 655, 0, 'g1'], [498, 652, 682, 710, 605, 793, 570, 710, 695, 'g1'],
  [730, 665, 900, 665, 830, 773, 835, 685, 672, 'g3'], [887, 760, 1045, 765, 960, 860, 960, 778, 768, 'g2'],
  [1020, 820, 1150, 825, 1065, 908, 1090, 828, 0, 'g2'], [195, 735, 313, 740, 260, 818, 260, 742, 0, 'g2'],
  [390, 740, 560, 815, 475, 910, 450, 838, 808, 'g1'], [650, 790, 830, 815, 752, 935, 750, 864, 848, 'g3'],
  [290, 905, 433, 905, 375, 1000, 360, 928, 915, 'g2'], [540, 900, 722, 950, 645, 1068, 630, 1012, 982, 'g1'],
  [820, 903, 985, 960, 900, 1038, 890, 965, 0, 'g3'], [228, 1000, 330, 985, 285, 1072, 275, 1010, 988, 'g2'],
  [425, 985, 595, 1055, 510, 1168, 495, 1112, 1075, 'g1'], [712, 1035, 885, 1040, 800, 1190, 805, 1145, 1098, 'g3'],
  [975, 990, 1115, 1045, 1020, 1105, 1040, 1030, 0, 'g2'], [590, 1130, 765, 1180, 690, 1305, 680, 1264, 1208, 'g1'],
  [877, 1125, 1030, 1240, 920, 1258, 940, 1195, 0, 'g3']
];
for (const p of petals) s += petal(...p);
s += '<path d="M290 620Q300 580 315 590 316 620 320 640zM288 900Q285 820 300 820 320 860 330 920z" fill="#8a8a8a"/>';
document.getElementById('solid').innerHTML = s;
// the ground passes in front of the lower part of the ball
document.getElementById('front').innerHTML =
  `<g clip-path="url(#over)" opacity=".8">${gridSvg}</g><path d="M4013 2543L4284 2737.700" stroke="#1f8f1f" stroke-width="3.200" stroke-dasharray="14 4"/>`;
```
